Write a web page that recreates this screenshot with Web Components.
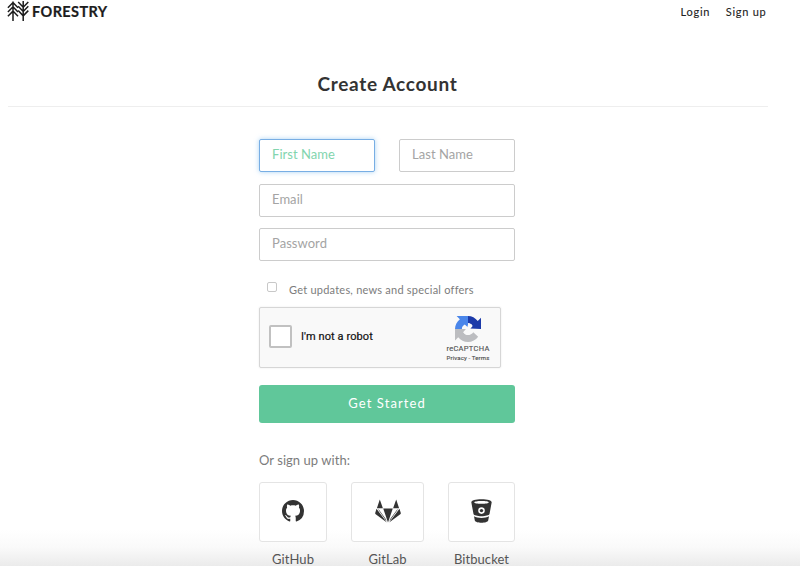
<!DOCTYPE html>
<html lang="en">
<head>
<meta charset="utf-8">
<title>Forestry - Create Account</title>
<style>
html,body{margin:0;height:567px;overflow:hidden;background:#fff}
body{font-family:Lato,"Liberation Sans",sans-serif;color:#333}
</style>
</head>
<body>
<signup-page></signup-page>
<script>
const define = (name, html) => {
  const t = document.createElement('template');
  t.innerHTML = html;
  customElements.define(name, class extends HTMLElement {
    constructor() {
      super();
      this.attachShadow({mode: 'open'}).append(t.content.cloneNode(true));
    }
  });
};

define('forestry-logo', `
<style>
:host{display:flex;align-items:center;gap:3px;height:22px;color:#1c1c1c;margin-left:-1px}
svg{display:block;width:22px;height:22px}
span{font:700 14.500px/22px Lato,sans-serif;letter-spacing:.4px;padding-top:2px;-webkit-text-stroke:.2px}
</style>
<svg viewBox="0 0 22 22" fill="none" stroke="currentColor" stroke-width="1.5">
<path d="M6 1.500v19.500M.9 7.700 6 2.500l5 5.200M.9 12 6 6.800l5 5.200M.9 16.300 6 11.100l5 5.200"/>
<path d="M16.200 1v20M11.200 2l5 5.200 5.100-5.200M11.200 6.300l5 5.200 5.100-5.200M11.200 10.600l5 5.200 5.100-5.200"/>
</svg><span>FORESTRY</span>`);

define('site-header', `
<style>
:host{display:flex;justify-content:space-between;height:24px;box-sizing:border-box}
nav{display:flex;gap:15.500px;padding-right:1.500px;font-size:11px;line-height:23px;color:#222;letter-spacing:.75px;-webkit-text-stroke:.1px}
</style>
<forestry-logo></forestry-logo><nav><span>Login</span><span>Sign up</span></nav>`);

define('page-title', `
<style>
:host{display:block;height:83px;box-sizing:border-box;border-bottom:1px solid #eee;padding-right:1px;
text-align:center;font-weight:700;font-size:19px;line-height:120px;letter-spacing:.7px;color:#333}
</style><slot></slot>`);

define('text-field', `
<style>
:host{display:block;box-sizing:border-box;height:33px;border:1px solid #ccc;border-radius:2px;padding:0 12px;
font-size:13px;line-height:29px;color:#a4a4a4;letter-spacing:.05px;background:#fff}
:host([focused]){border-color:#78aee4;color:#82d5ae;box-shadow:0 0 5px rgba(102,175,233,.55)}
</style><slot></slot>`);

define('news-option', `
<style>
:host{display:flex;align-items:center;height:20px;padding-left:8px;gap:12px;font-size:11px;color:#7c7c7c;letter-spacing:.23px}
i{width:8px;height:8px;border:1px solid #c8c8c8;border-radius:2px;background:#fff;margin-top:-5px}
</style><i></i><slot></slot>`);

define('captcha-box', `
<style>
:host{display:flex;align-items:center;box-sizing:border-box;width:242px;height:61px;border:1px solid #d6d6d6;border-radius:2px;
background:#f9f9f9;box-shadow:0 0 2px rgba(0,0,0,.1);font-family:Roboto,sans-serif;padding:0 9px 0 9px}
i{box-sizing:border-box;width:23px;height:23px;border:2px solid #c1c1c1;border-radius:2px;background:#fff;margin-top:-2px}
b{font-weight:400;font-size:11px;letter-spacing:.09px;color:#111;margin:-2px auto 0 9px;-webkit-text-stroke:.2px}
div{display:flex;flex-direction:column;align-items:center;width:46px;color:#555}
svg{width:26px;height:26px;margin-top:3px}
span{font-size:7.500px;line-height:10px;letter-spacing:.3px;margin-top:2px;white-space:nowrap;-webkit-text-stroke:.15px}
small{font-size:6px;line-height:8px;letter-spacing:.14px;white-space:nowrap;-webkit-text-stroke:.15px}
</style>
<i></i><b>I'm not a robot</b>
<div><svg viewBox="0 0 64 64">
<path fill="#1c3aa9" d="M64 32V4l-8 8C50 4.800 41.500 0 32 0v17c5 0 8 2 11 7l-6 7z"/>
<path fill="#4a86ea" d="M32 0H4l8 8C5 14 0 22.500 0 32h17c0-5 2-8 7-11l8 7z"/>
<path fill="#bcbdc0" d="M0 32v28l8-8c6 7 14 12 24 12 10 0 19-5 25-13L45 40c-3 4-8 7-13 7-5 0-9-2-11-7l7-8z"/>
<path fill="#f9f9f9" d="m24 23 6 5 3-10 8 3 2 4-6 7h9v5l-9 6-5-5-7 6-5-4 7-8h-8z"/>
</svg><span>reCAPTCHA</span><small>Privacy - Terms</small></div>`);

define('submit-button', `
<style>
:host{display:block;height:38px;border-radius:3px;background:#60c79a;color:#fff;text-align:center;
font-size:13px;line-height:37px;letter-spacing:1.080px}
</style><slot></slot>`);

define('provider-card', `
<style>
:host{display:flex;flex-direction:column;align-items:center;font-size:13px;line-height:18px;color:#555;letter-spacing:.08px}
div{display:flex;align-items:center;justify-content:center;box-sizing:border-box;width:100%;height:60px;border:1px solid #e4e4e4;
border-radius:3px;background:#fff;margin-bottom:8px;color:#333}
</style><div><slot name="icon"></slot></div><slot></slot>`);

define('signup-page', `
<style>
:host{display:block;box-sizing:border-box;height:567px;padding:0 32px 0 8px;overflow:hidden;
background:linear-gradient(#fff 0 530px,#fafafa 547px,#ebebeb 566px,#fff 566px)}
main{display:flex;flex-direction:column;width:256px;margin:32px 0 0 251px}
.names{display:grid;grid-template-columns:116px 116px;gap:24px}
text-field{margin-bottom:12px}
text-field.email{margin-bottom:11px}
news-option{margin-top:6px}
captcha-box{margin-top:8px}
submit-button{margin-top:17px}
p{margin:26px 0 0;font-size:13px;line-height:22px;color:#7c7c7c;letter-spacing:.05px}
.providers{display:grid;grid-template-columns:68px 73px 67px;justify-content:space-between;margin-top:11px}
svg{display:block;fill:currentColor}
.gh{width:22px;height:22px;margin-top:-2px}.gl{width:26px;height:24px;margin-top:-2px}.bb{width:21px;height:24px;margin-top:-2px}
</style>
<site-header></site-header>
<page-title>Create Account</page-title>
<main>
<div class="names"><text-field focused>First Name</text-field><text-field>Last Name</text-field></div>
<text-field class="email">Email</text-field>
<text-field>Password</text-field>
<news-option>Get updates, news and special offers</news-option>
<captcha-box></captcha-box>
<submit-button>Get Started</submit-button>
<p>Or sign up with:</p>
<div class="providers">
<provider-card><svg slot="icon" class="gh" viewBox="0 0 16 16"><path d="M8 0C3.580 0 0 3.580 0 8c0 3.540 2.290 6.530 5.470 7.590.4.070.550-.170.550-.380 0-.190-.010-.820-.010-1.490-2.010.370-2.530-.490-2.690-.940-.090-.230-.480-.940-.820-1.130-.280-.150-.680-.520-.010-.530.630-.010 1.080.580 1.230.820.720 1.210 1.870.870 2.330.660.070-.520.280-.870.510-1.070-1.780-.2-3.640-.890-3.640-3.950 0-.870.310-1.590.820-2.150-.080-.2-.360-1.020.080-2.120 0 0 .670-.210 2.200.820.640-.180 1.320-.270 2-.270.680 0 1.360.090 2 .270 1.530-1.040 2.200-.820 2.200-.820.440 1.100.160 1.920.080 2.120.510.560.820 1.270.820 2.150 0 3.070-1.870 3.750-3.650 3.950.290.250.540.730.540 1.480 0 1.070-.010 1.930-.010 2.200 0 .210.150.460.550.380A8.013 8.013 0 0 0 16 8c0-4.420-3.580-8-8-8z"/></svg>GitHub</provider-card>
<provider-card><svg slot="icon" class="gl" viewBox="0 0 26 24"><path d="M4.800.5 7.900 9.200H1.900zM21.200.5l2.900 8.700h-6zM8.200 9.600h9.600L13 23.500zM1.500 9.800 11.900 23.400.7 15.300Q0 14.700.2 14zM24.500 9.800 14.100 23.400l11.200-8.100q.7-.6.5-1.300zM3.200 10.600h.6l7.300 9.800.3 1.600zM22.800 10.600h-.6l-7.300 9.800-.3 1.600z"/></svg>GitLab</provider-card>
<provider-card><svg slot="icon" class="bb" viewBox="0 0 21 24"><path fill-rule="evenodd" d="M10.500.3C4.500.3.3 1.600.3 3.300L2.500 15c.4 1.300 4 2.200 8 2.200s7.600-.9 8-2.200l2.200-11.700c0-1.700-4.200-3-10.200-3zm0 1.800c4.200 0 7.200.6 7.200 1.300s-3 1.300-7.200 1.300-7.200-.6-7.200-1.300 3-1.300 7.200-1.300zm0 6.200a3.300 3.300 0 1 1 0 6.600 3.300 3.300 0 0 1 0-6.600z"/><circle cx="10.500" cy="11.600" r="1.700"/><path d="M3 17.300c3.500 2.200 11.500 2.200 15 0l-.8 4.200c-.8 3-12.600 3-13.400 0z"/></svg>Bitbucket</provider-card>
</div>
</main>`);
</script>
</body>
</html>
